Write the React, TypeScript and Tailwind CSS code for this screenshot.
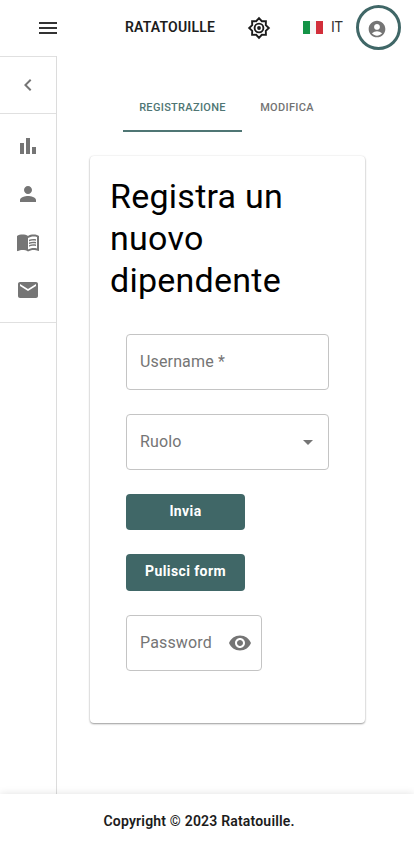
import type { ReactNode } from 'react';
import {
  MdAccountCircle,
  MdArrowDropDown,
  MdBarChart,
  MdChevronLeft,
  MdEmail,
  MdMenu,
  MdMenuBook,
  MdPerson,
  MdVisibility,
} from 'react-icons/md';

// Eight-pointed sun used by the theme switch.
function SunIcon() {
  return (
    <svg viewBox="0 0 24 24" className="size-6" fill="none" stroke="currentColor" strokeWidth="1.9">
      <path d="M12 2.2 14.8 5.2 18.9 5.1 18.8 9.2 21.8 12 18.8 14.8 18.9 18.9 14.8 18.8 12 21.8 9.2 18.8 5.1 18.9 5.2 14.8 2.2 12 5.2 9.2 5.1 5.1 9.2 5.2Z" />
      <circle cx="12" cy="12" r="4.4" />
      <circle cx="12" cy="12" r="1.9" fill="currentColor" stroke="none" />
    </svg>
  );
}

function Header() {
  return (
    <header className="flex h-14 shrink-0 items-center">
      <button className="ml-9 flex size-6 items-center justify-center text-[#333]">
        <MdMenu className="size-6" />
      </button>
      <h1 className="ml-[65px] mb-0.5 w-[91px] whitespace-nowrap text-sm font-semibold leading-5 tracking-[0.17px] text-[#1c1c1c]">
        RATATOUILLE
      </h1>
      <button className="ml-[31px] text-[#1c1c1c]">
        <SunIcon />
      </button>
      <div className="mb-0.5 ml-8 flex items-center">
        <span className="flex h-[13px] w-5">
          <span className="flex-1 bg-[#149447]" />
          <span className="flex-1 bg-[#f5f5f5]" />
          <span className="flex-1 bg-[#d22e3a]" />
        </span>
        <span className="ml-2 w-[13px] text-sm leading-5 text-[#333]">IT</span>
      </div>
      <button className="mb-px ml-3 flex size-[45px] items-center justify-center rounded-full border-[3px] border-[#406767] text-[#757575]">
        <MdAccountCircle className="mt-[3px] mr-[3px] size-5" />
      </button>
    </header>
  );
}

function NavItem({ children }: { children: ReactNode }) {
  return <li className="flex h-12 items-center justify-center">{children}</li>;
}

function Sidebar() {
  return (
    <aside className="w-[57px] shrink-0 border-r border-[#dcdcdc] text-[#757575]">
      <div className="flex h-[58px] items-center justify-center border-y border-[#e0e0e0]">
        <MdChevronLeft className="size-6" />
      </div>
      <ul className="border-b border-[#e0e0e0] py-2">
        <NavItem><MdBarChart className="size-6" /></NavItem>
        <NavItem><MdPerson className="size-6" /></NavItem>
        <NavItem><MdMenuBook className="size-6" /></NavItem>
        <NavItem><MdEmail className="size-6" /></NavItem>
      </ul>
    </aside>
  );
}

function Tabs() {
  return (
    <div className="flex h-12 pl-[66px] text-[11px] font-medium leading-[14px] tracking-[0.31px]">
      <div className="flex w-[119px] items-center justify-center border-b-2 border-[#4f7674] pt-0.5 text-[#4f7674]">
        REGISTRAZIONE
      </div>
      <div className="flex w-[90px] items-center justify-center text-[#737373]">MODIFICA</div>
    </div>
  );
}

function FormCard() {
  return (
    <section className="mt-6 ml-[33px] h-[567px] w-[275px] rounded bg-white pt-[19px] shadow-[0_1px_2px_rgba(0,0,0,0.38),0_0_2px_rgba(0,0,0,0.09)]">
      <h2 className="ml-5 w-[200px] text-[34px] leading-[42px] tracking-[0.25px] text-black">
        Registra un nuovo dipendente
      </h2>
      <form className="ml-9 mt-[33px] flex flex-col items-start gap-6 text-base tracking-[0.15px] text-[#757575]">
        <div className="flex h-14 w-[203px] items-center rounded border border-[#c4c4c4] px-[13px]">Username *</div>
        <div className="flex h-14 w-[203px] items-center justify-between rounded border border-[#c4c4c4] pl-[13px] pr-2">
          Ruolo
          <MdArrowDropDown className="size-6" />
        </div>
        <button type="button" className="h-9 w-[119px] rounded bg-[#406767] pb-0.5 text-sm font-bold leading-5 tracking-[0.4px] text-white">
          Invia
        </button>
        <button type="button" className="h-[37px] w-[119px] rounded bg-[#406767] pb-[3px] text-sm font-bold leading-5 tracking-[0.4px] text-white">
          Pulisci form
        </button>
        <div className="flex h-14 w-[136px] items-center justify-between rounded border border-[#c4c4c4] pl-[13px] pr-[9px]">
          Password
          <MdVisibility className="size-6" />
        </div>
      </form>
    </section>
  );
}

export default function App() {
  return (
    <div className="flex h-[850px] w-[414px] flex-col overflow-hidden bg-white font-[Roboto,sans-serif]">
      <Header />
      <div className="flex min-h-0 flex-1">
        <Sidebar />
        <main className="min-w-0 flex-1 pt-7">
          <Tabs />
          <FormCard />
        </main>
      </div>
      <footer className="flex h-14 shrink-0 items-center bg-white pb-0.5 pl-[103.5px] text-sm font-semibold leading-5 tracking-[0.19px] text-[#1c1c1c] shadow-[0_0_8px_rgba(0,0,0,0.12)]">
        Copyright © 2023 Ratatouille.
      </footer>
    </div>
  );
}
